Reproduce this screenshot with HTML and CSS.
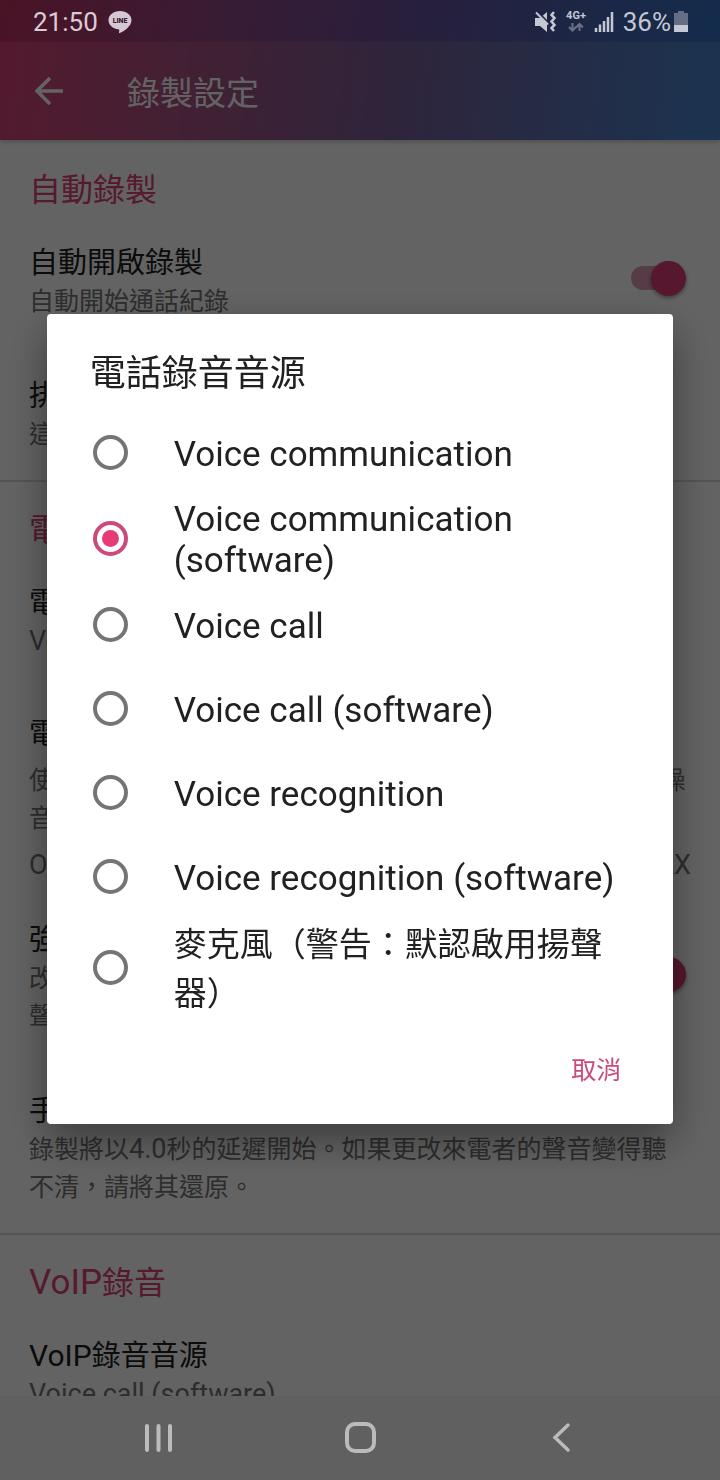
FILE: index.html
```html
<!DOCTYPE html>
<html lang="zh-TW">
<head>
<meta charset="UTF-8">
<meta name="viewport" content="width=device-width, initial-scale=1">
<title>錄製設定</title>
<link rel="stylesheet" href="styles.css">
</head>
<body>
<div class="status-bar">
  <span class="clock">21:50</span>
  <svg class="line-icon" width="24" height="24" viewBox="0 0 24 24">
    <path d="M12 1C5.600 1 .5 5 .5 10.200c0 4.700 4.200 8.500 9.800 9.100.9.200 1 .8.900 1.600l-.2 1.700c0 .5.300.8.900.5 3.600-1.700 11.600-6.700 11.600-12.900C23.500 5 18.400 1 12 1z" fill="#d6c8d2"/>
    <text x="12" y="13" text-anchor="middle" font-size="7" font-weight="900" fill="#3c1a30">LINE</text>
  </svg>
  <div class="status-icons">
    <svg width="24" height="24" viewBox="0 0 24 24">
      <path d="M1 8h5l7-6v20l-7-6H1z" fill="#c3c8d3"/>
      <path d="M1 0l15 15" stroke="#222745" stroke-width="3"/>
      <path d="M2 2.500l12 12" stroke="#c3c8d3" stroke-width="2"/>
      <path d="M20 2l-2.500 3 3 3-3 3.500 3 3.500-3 3 2.500 3" fill="none" stroke="#c3c8d3" stroke-width="2.500"/>
    </svg>
    <svg width="24" height="24" viewBox="0 0 24 24">
      <text x="12" y="9" text-anchor="middle" font-size="11" font-weight="700" fill="#c3c8d3">4G+</text>
      <path d="M8.500 13v7M5 17l3.500 3.500L12 17M15.500 21v-7M12 17.500L15.500 14l3.500 3.500" fill="none" stroke="#68708a" stroke-width="2"/>
    </svg>
    <svg width="20" height="24" viewBox="0 0 20 24">
      <path d="M2 18v4M6 14.500V22M10 11v11M14 7v15M18 2v20" stroke="#c3c8d3" stroke-width="2.500"/>
    </svg>
    <span class="battery-level">36%</span>
    <svg width="16" height="24" viewBox="0 0 16 24">
      <path d="M5 1h6v2h4v12H1V3h4z" fill="#646f86"/>
      <path d="M1 15h14v7H1z" fill="#c3c8d3"/>
    </svg>
  </div>
</div>

<div class="app">
  <header class="toolbar">
    <button class="back" aria-label="返回">
      <svg width="28" height="28" viewBox="0 0 28 28"><path d="M28 14H2M15 1L2 14l13 13" fill="none" stroke="currentColor" stroke-width="3.500"/></svg>
    </button>
    <h1>錄製設定</h1>
  </header>

  <main class="settings">
    <section>
      <h2>自動錄製</h2>
      <div class="pref with-switch">
        <label for="autoRecord"><span class="name">自動開啟錄製</span><span class="desc">自動開始通話紀錄</span></label>
        <input class="switch" type="checkbox" role="switch" id="autoRecord" checked>
      </div>
      <div class="pref">
        <span class="name">排除的號碼</span>
        <span class="desc">這些號碼不會自動錄製</span>
      </div>
    </section>

    <section>
      <h2>電話錄音</h2>
      <div class="pref">
        <span class="name">電話錄音音源</span>
        <span class="desc value">Voice communication (software)</span>
      </div>
      <div class="pref note">
        <span class="name">電話錄音提示</span>
        <p class="desc">使用與<span class="latin">VoIP</span>相容的錄音音源，若錄音沒有聲音或者聽到雜噪<br>音請更改音源。</p>
        <p class="desc devices"><span>OnePlus, Pixel, Nokia, Xiaomi,</span><span>Mi MAX</span></p>
      </div>
      <div class="pref with-switch">
        <label for="boost"><span class="name">強制通話音量</span><span class="desc">改善來電者的聲音，<br>聲音會更清楚</span></label>
        <input class="switch" type="checkbox" role="switch" id="boost" checked>
      </div>
      <div class="pref">
        <span class="name">手動錄製延遲</span>
        <span class="desc">錄製將以<span class="latin">4.0</span>秒的延遲開始。如果更改來電者的聲音變得聽不清，請將其還原。</span>
      </div>
    </section>

    <section>
      <h2><span class="latin">VoIP</span>錄音</h2>
      <div class="pref">
        <span class="name"><span class="latin">VoIP</span>錄音音源</span>
        <span class="desc value">Voice call (software)</span>
      </div>
    </section>
  </main>
</div>

<div class="scrim">
  <form class="dialog" role="dialog" aria-labelledby="dialogTitle">
    <h2 id="dialogTitle">電話錄音音源</h2>
    <label class="choice"><input type="radio" name="source"><span>Voice communication</span></label>
    <label class="choice"><input type="radio" name="source" checked><span>Voice communication (software)</span></label>
    <label class="choice"><input type="radio" name="source"><span>Voice call</span></label>
    <label class="choice"><input type="radio" name="source"><span>Voice call (software)</span></label>
    <label class="choice"><input type="radio" name="source"><span>Voice recognition</span></label>
    <label class="choice"><input type="radio" name="source"><span>Voice recognition (software)</span></label>
    <label class="choice cjk"><input type="radio" name="source"><span>麥克風（警告：默認啟用揚聲器）</span></label>
    <div class="actions"><button type="button">取消</button></div>
  </form>
</div>

<nav class="nav-bar">
  <button aria-label="最近"><svg width="32" height="32" viewBox="0 0 32 32"><path d="M4 4v24M15.500 4v24M27 4v24" stroke="currentColor" stroke-width="4" stroke-linecap="round"/></svg></button>
  <button aria-label="主畫面"><svg width="32" height="32" viewBox="0 0 32 32"><rect x="3" y="2" width="27" height="27" rx="8" fill="none" stroke="currentColor" stroke-width="4"/></svg></button>
  <button aria-label="返回"><svg width="32" height="32" viewBox="0 0 32 32"><path d="M23 3L10 15.500 23 28" fill="none" stroke="currentColor" stroke-width="3.500" stroke-linecap="round"/></svg></button>
</nav>
</body>
</html>
```
FILE: styles.css
```css
* {
  box-sizing: border-box;
}
body {
  margin: 0;
  height: 100vh;
  display: flex;
  flex-direction: column;
  overflow: hidden;
  background: #fff;
  color: #212121;
  font-family: Roboto, "Noto Sans CJK TC", sans-serif;
}
h1, h2, p {
  margin: 0;
  font-weight: 400;
}
button {
  border: 0;
  padding: 0;
  background: none;
  font: inherit;
}
svg {
  display: block;
}

/* system bars, drawn above the scrim */
.status-bar {
  position: relative;
  z-index: 2;
  flex: none;
  height: 42px;
  padding: 2px 31px 0 33px;
  display: flex;
  align-items: center;
  gap: 10px;
  background: linear-gradient(97deg, #4a1326, #3a1b33 28%, #271f3d 58%, #142c4c);
  color: #dccbd5;
  font-size: 26px;
}
.status-icons {
  margin-left: auto;
  display: flex;
  align-items: center;
  gap: 6px;
  color: #c3c8d3;
}
.battery-level {
  margin: 0 -4px 0 3px;
}
.nav-bar {
  position: relative;
  z-index: 2;
  flex: none;
  height: 84px;
  padding: 0 58px;
  display: grid;
  grid-template-columns: repeat(3, 1fr);
  background: #606060;
  color: #bbb;
}
.nav-bar button {
  display: grid;
  place-items: center;
  color: inherit;
}

/* settings page */
.app {
  flex: 1;
  min-height: 0;
  overflow: hidden;
}
.toolbar {
  position: relative;
  height: 98px;
  padding: 0 35px;
  display: flex;
  align-items: center;
  gap: 64px;
  background: linear-gradient(97deg, #d84478, #a85485 28%, #785f98 55%, #4685d0);
  box-shadow: 0 2px 4px rgba(0, 0, 0, 0.2);
  color: #fff;
}
.back {
  color: inherit;
}
.toolbar h1 {
  font-size: 33px;
}
.settings {
  padding-top: 2px;
}
.settings section + section {
  border-top: 2px solid #dadada;
}
.settings h2 {
  padding: 24px 29px 0;
  font-size: 32px;
  line-height: 48px;
  color: #e04078;
}
.settings h2 .latin {
  font-size: 35px;
}
.pref {
  padding: 29px 34px 26px 29px;
}
.name {
  display: block;
  font-size: 29px;
  line-height: 40px;
}
.name .latin {
  font-size: 30px;
}
.desc {
  display: block;
  font-size: 25px;
  line-height: 38px;
  color: #757575;
}
.desc .latin {
  font-size: 27px;
  line-height: 1;
}
.value {
  font-size: 27px;
  line-height: 36px;
}
.note {
  padding-bottom: 7px;
  white-space: nowrap;
}
.note .desc {
  margin-top: 8px;
}
.note .devices {
  margin-right: -5px;
  display: flex;
  justify-content: space-between;
  font-size: 27px;
}
.with-switch {
  display: flex;
  align-items: center;
  justify-content: space-between;
}
.switch {
  appearance: none;
  flex: none;
  display: flex;
  align-items: center;
  width: 55px;
  height: 35px;
  margin: 0 0 8px;
}
.switch::before {
  content: "";
  width: 50px;
  height: 24px;
  border-radius: 12px;
  background: #dd9cb5;
}
.switch::after {
  content: "";
  flex: none;
  width: 35px;
  height: 35px;
  margin-left: -30px;
  border-radius: 50%;
  background: #e03c76;
  box-shadow: 0 2px 4px rgba(0, 0, 0, 0.4);
}

/* source picker */
.scrim {
  position: fixed;
  inset: 0;
  padding: 42px 0 84px;
  display: grid;
  place-items: center;
  background: rgba(0, 0, 0, 0.61);
}
.dialog {
  width: 87%;
  border-radius: 4px;
  background: #fff;
  box-shadow: 0 16px 40px rgba(0, 0, 0, 0.4);
}
.dialog h2 {
  padding: 33px 43px 11px;
  font-size: 36px;
  line-height: 54px;
}
.choice {
  min-height: 84px;
  padding: 3px 46px;
  display: flex;
  align-items: center;
  gap: 46px;
  font-size: 35px;
  line-height: 41px;
}
.cjk {
  padding-top: 0;
  padding-bottom: 0;
  font-size: 33px;
  line-height: 49px;
}
.choice input {
  appearance: none;
  flex: none;
  display: grid;
  place-items: center;
  width: 35px;
  height: 35px;
  margin: 0 0 4px;
  border: 4px solid #757575;
  border-radius: 50%;
}
.choice input:checked {
  border-color: #cc4a7b;
}
.choice input:checked::after {
  content: "";
  width: 17px;
  height: 17px;
  border-radius: 50%;
  background: #e63c76;
}
.actions {
  padding: 34px 52px;
  display: flex;
  justify-content: flex-end;
}
.actions button {
  font-size: 25px;
  line-height: 38px;
  color: #cc4a7b;
}
```
